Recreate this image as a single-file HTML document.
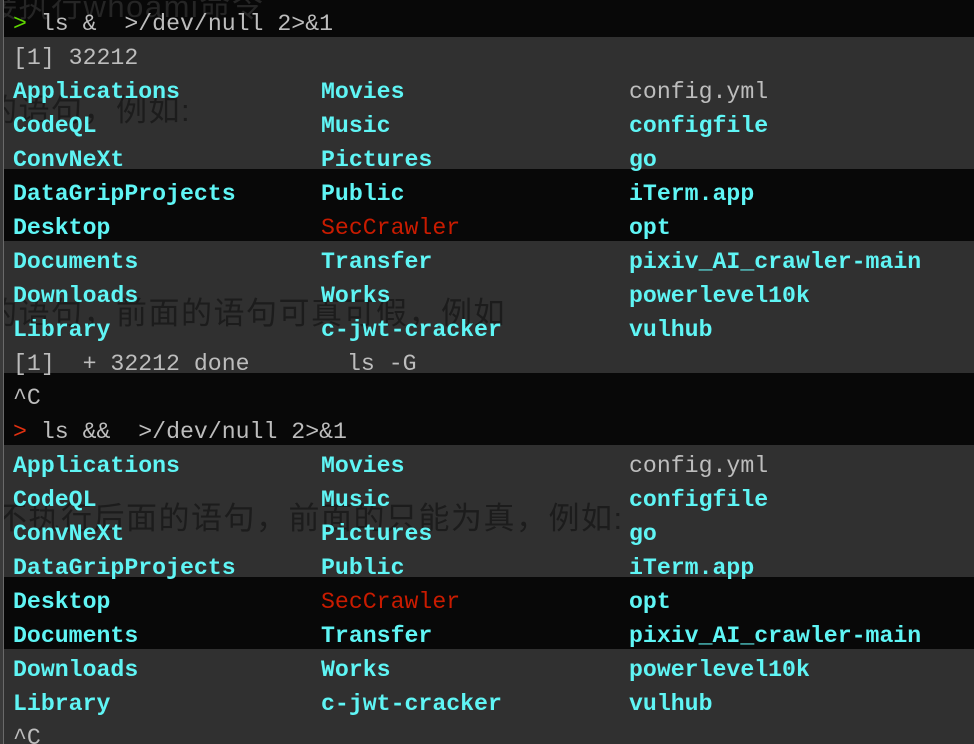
<!DOCTYPE html>
<html><head><meta charset="utf-8"><style>
html,body{margin:0;padding:0;width:974px;height:744px;overflow:hidden}
body{background:#303030;position:relative;font-family:"Liberation Mono","DejaVu Sans Mono",monospace;font-size:23.2px}
.b{position:absolute;left:0;width:974px}
.d{background:#080808}
.g{background:#303030}
.bg{position:absolute;font-family:"Liberation Sans","Noto Sans CJK SC",sans-serif;font-size:31px;line-height:36px;letter-spacing:1.5px;color:#1c1c1c;white-space:nowrap}
.l{position:absolute;height:34px;line-height:34px;white-space:pre}
.c{color:#5ff5f5;font-weight:bold}
.w{color:#bdbdbd}
.r{color:#c91b00}
.edge{position:absolute;left:0;top:0;width:4px;height:744px;background:#3a3a3a;border-right:1px solid #6a6a6a;box-sizing:border-box}
</style></head><body>
<div class="b d" style="top:0;height:37px"></div>
<div class="b g" style="top:37px;height:132px"></div>
<div class="b d" style="top:169px;height:72px"></div>
<div class="b g" style="top:241px;height:132px"></div>
<div class="b d" style="top:373px;height:72px"></div>
<div class="b g" style="top:445px;height:132px"></div>
<div class="b d" style="top:577px;height:72px"></div>
<div class="b g" style="top:649px;height:95px"></div>

<div class="bg" style="left:-14px;top:-11px;color:#252525">接执行whoami命令</div>
<div class="bg" style="left:-14px;top:93px">的语句，例如:</div>
<div class="bg" style="left:-14px;top:296px">的语句，前面的语句可真可假，例如</div>
<div class="bg" style="left:-4px;top:501px">不执行后面的语句，前面的只能为真，例如:</div>

<div class="edge"></div>
<div id="t"></div>
<script>
var L=[
[['<span style="color:#5fd700">&gt;</span><span class="w"> ls &amp;  &gt;/dev/null 2&gt;&amp;1</span>']],
[['<span class="w">[1] 32212</span>']],
['Applications','Movies','<span class="w" style="font-weight:normal">config.yml</span>'],
['CodeQL','Music','configfile'],
['ConvNeXt','Pictures','go'],
['DataGripProjects','Public','iTerm.app'],
['Desktop','<span class="r" style="font-weight:normal">SecCrawler</span>','opt'],
['Documents','Transfer','pixiv_AI_crawler-main'],
['Downloads','Works','powerlevel10k'],
['Library','c-jwt-cracker','vulhub'],
[['<span class="w">[1]  + 32212 done       ls -G</span>']],
[['<span class="w">^C</span>']],
[['<span style="color:#e03010">&gt;</span><span class="w"> ls &amp;&amp;  &gt;/dev/null 2&gt;&amp;1</span>']],
['Applications','Movies','<span class="w" style="font-weight:normal">config.yml</span>'],
['CodeQL','Music','configfile'],
['ConvNeXt','Pictures','go'],
['DataGripProjects','Public','iTerm.app'],
['Desktop','<span class="r" style="font-weight:normal">SecCrawler</span>','opt'],
['Documents','Transfer','pixiv_AI_crawler-main'],
['Downloads','Works','powerlevel10k'],
['Library','c-jwt-cracker','vulhub'],
[['<span class="w">^C</span>']]
];
var h='',xs=[13,321,629];
L.forEach(function(r,i){var top=7+34*i;
 if(Array.isArray(r[0])){h+='<div class="l" style="left:13px;top:'+top+'px">'+r[0][0]+'</div>';}
 else r.forEach(function(s,j){h+='<div class="l c" style="left:'+xs[j]+'px;top:'+top+'px">'+s+'</div>';});
});
document.getElementById('t').innerHTML=h;
</script>
</body></html>
